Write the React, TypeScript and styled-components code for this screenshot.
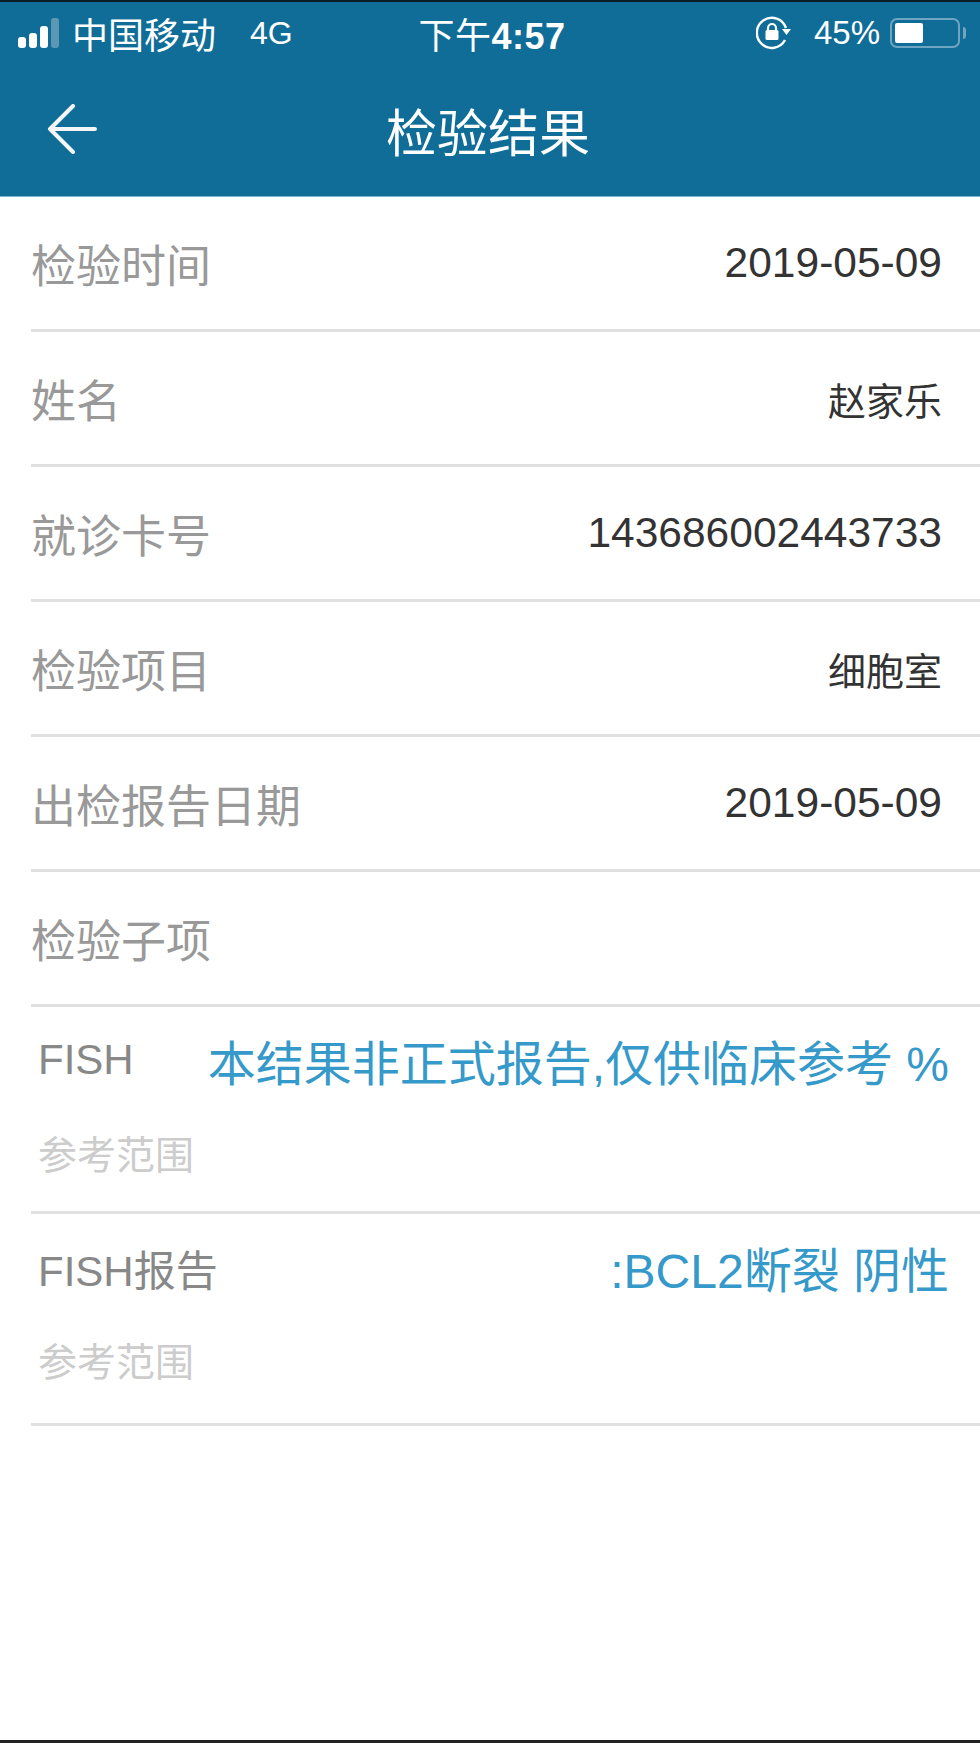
import styled, { createGlobalStyle } from "styled-components";

const GlobalStyle = createGlobalStyle`
  html, body {
    margin: 0;
    padding: 0;
    background: #fff;
  }
  body {
    font-family: "Liberation Sans", "Noto Sans CJK SC", sans-serif;
  }
`;

const Page = styled.div`
  width: 980px;
  height: 1743px;
  display: flex;
  flex-direction: column;
  background: #fff;
  border-bottom: 3px solid #222;
  box-sizing: border-box;
  overflow: hidden;
`;

const Header = styled.header`
  height: 197px;
  box-sizing: border-box;
  flex-shrink: 0;
  background: #0f6d98;
  border-top: 2px solid #0a1c26;
  border-bottom: 1px solid #7fb4cc;
  color: #fff;
`;

const StatusBar = styled.div`
  height: 62px;
  padding: 0 14px 0 18px;
  display: grid;
  grid-template-columns: 1fr auto 1fr;
  align-items: center;
  font-size: 32px;
`;

const StatusLeft = styled.div`
  display: flex;
  align-items: center;
`;

const Signal = styled.div`
  display: flex;
  align-items: flex-end;
  gap: 3px;
  height: 30px;
  margin-right: 13px;
`;

const SignalBar = styled.span<{ $h: number; $dim?: boolean }>`
  width: 8px;
  height: ${(p) => p.$h}px;
  border-radius: 3px;
  background: ${(p) => (p.$dim ? "#5c97b4" : "#fff")};
`;

const Carrier = styled.span`
  font-size: 36px;
  margin-right: 34px;
`;

const Clock = styled.div`
  font-size: 36px;
  letter-spacing: 0.5px;
  b {
    font-weight: 700;
  }
`;

const StatusRight = styled.div`
  display: flex;
  align-items: center;
  justify-content: flex-end;
`;

const Percent = styled.span`
  font-size: 33px;
  margin: 0 10px 0 22px;
`;

const Battery = styled.div`
  width: 70px;
  height: 30px;
  box-sizing: border-box;
  border: 2px solid #6fa5c0;
  border-radius: 7px;
  padding: 3px;
  display: flex;
`;

const BatteryFill = styled.div`
  width: 28px;
  background: #fff;
  border-radius: 2px;
`;

const BatteryCap = styled.div`
  width: 3px;
  height: 12px;
  margin-left: 3px;
  background: #6fa5c0;
  border-radius: 0 3px 3px 0;
`;

const NavBar = styled.nav`
  position: relative;
  height: 132px;
  display: flex;
  align-items: center;
  justify-content: center;
`;

const BackIcon = styled.svg`
  position: absolute;
  left: 47px;
  top: 40px;
`;

const Title = styled.h1`
  margin: 0;
  font-size: 51px;
  font-weight: 400;
  transform: translateX(-2px);
`;

const List = styled.main`
  display: flex;
  flex-direction: column;
  padding-left: 31px;
`;

const Row = styled.div`
  height: 135px;
  box-sizing: border-box;
  padding-right: 38px;
  border-bottom: 3px solid #e0e0e0;
  display: flex;
  align-items: center;
  justify-content: space-between;
`;

const Label = styled.span`
  font-size: 45px;
  color: #999;
`;

const Value = styled.span`
  font-size: 42.5px;
  color: #333;
`;

const ChineseValue = styled(Value)`
  font-size: 38px;
`;

const SubRow = styled.div<{ $h: number }>`
  height: ${(p) => p.$h}px;
  box-sizing: border-box;
  padding: 24px 31px 0 7px;
  border-bottom: 3px solid #e0e0e0;
  display: flex;
  flex-direction: column;
`;

const SubTop = styled.div`
  display: flex;
  align-items: center;
  justify-content: space-between;
  height: 58px;
`;

const SubName = styled.span`
  font-size: 42px;
  color: #888;
`;

const SubResult = styled.span`
  font-size: 48px;
  color: #3599c9;
  white-space: nowrap;
`;

const SubRange = styled.div`
  margin-top: 35px;
  font-size: 39px;
  color: #ccc;
`;

export default function App() {
  return (
    <Page>
      <GlobalStyle />
      <Header>
        <StatusBar>
          <StatusLeft>
            <Signal>
              <SignalBar $h={11} />
              <SignalBar $h={15} />
              <SignalBar $h={22} />
              <SignalBar $h={30} $dim />
            </Signal>
            <Carrier>中国移动</Carrier>
            <span>4G</span>
          </StatusLeft>
          <Clock>
            下午<b>4:57</b>
          </Clock>
          <StatusRight>
            <svg width="36" height="34" viewBox="0 0 36 34" fill="none">
              <path d="M29 24A15 15 0 1 1 30 12" stroke="#fff" strokeWidth="2.5" />
              <path d="M26 13h9l-4.5 6z" fill="#fff" />
              <rect x="9.5" y="14" width="13" height="10" rx="1.5" fill="#fff" />
              <path d="M12 15v-3a4 4 0 0 1 8 0v3" stroke="#fff" strokeWidth="2.2" />
            </svg>
            <Percent>45%</Percent>
            <Battery>
              <BatteryFill />
            </Battery>
            <BatteryCap />
          </StatusRight>
        </StatusBar>
        <NavBar>
          <BackIcon width="50" height="50" viewBox="0 0 50 50" fill="none">
            <path
              d="M48 25H3M26 2L3 25l23 23"
              stroke="#f4f7f9"
              strokeWidth="4"
              strokeLinecap="round"
              strokeLinejoin="round"
            />
          </BackIcon>
          <Title>检验结果</Title>
        </NavBar>
      </Header>
      <List>
        <Row>
          <Label>检验时间</Label>
          <Value>2019-05-09</Value>
        </Row>
        <Row>
          <Label>姓名</Label>
          <ChineseValue>赵家乐</ChineseValue>
        </Row>
        <Row>
          <Label>就诊卡号</Label>
          <Value>143686002443733</Value>
        </Row>
        <Row>
          <Label>检验项目</Label>
          <ChineseValue>细胞室</ChineseValue>
        </Row>
        <Row>
          <Label>出检报告日期</Label>
          <Value>2019-05-09</Value>
        </Row>
        <Row>
          <Label>检验子项</Label>
        </Row>
        <SubRow $h={207}>
          <SubTop>
            <SubName>FISH</SubName>
            <SubResult>本结果非正式报告,仅供临床参考 %</SubResult>
          </SubTop>
          <SubRange>参考范围</SubRange>
        </SubRow>
        <SubRow $h={212}>
          <SubTop>
            <SubName>FISH报告</SubName>
            <SubResult>:BCL2断裂 阴性</SubResult>
          </SubTop>
          <SubRange>参考范围</SubRange>
        </SubRow>
      </List>
    </Page>
  );
}
